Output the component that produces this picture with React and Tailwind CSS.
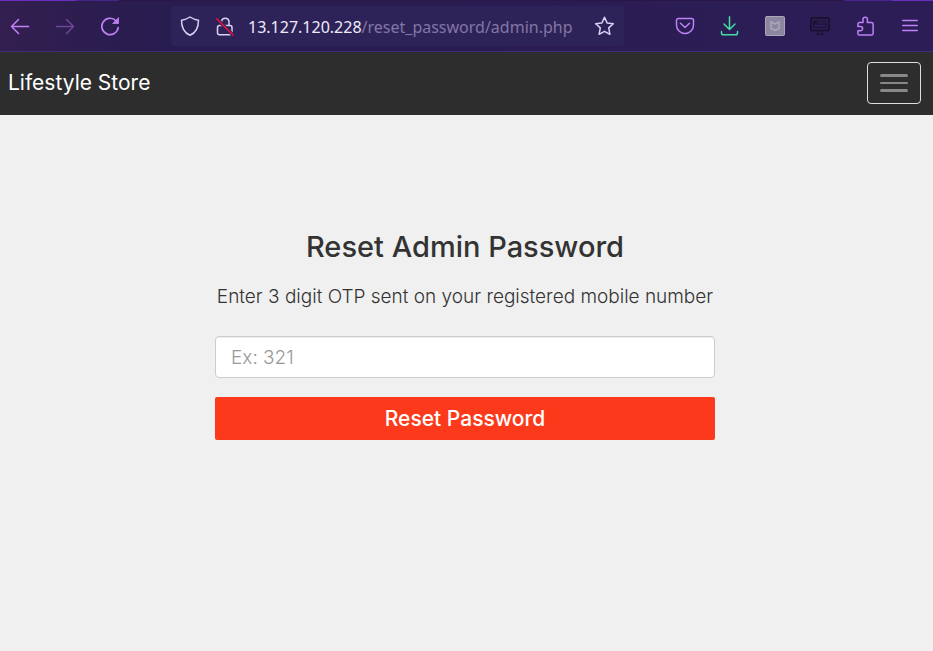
function ToolbarButton({ label, children }) {
  return (
    <button type="button" aria-label={label} className="flex h-10 w-10 shrink-0 items-center justify-center">
      {children}
    </button>
  );
}

function Icon({ children, className = '' }) {
  return (
    <svg
      viewBox="0 0 20 20"
      fill="none"
      stroke="currentColor"
      strokeWidth="1.5"
      strokeLinecap="round"
      strokeLinejoin="round"
      className={`h-5 w-5 shrink-0 ${className}`}
      aria-hidden="true"
    >
      {children}
    </svg>
  );
}

function TabStrip() {
  return (
    <div className="flex h-px">
      <span className="w-[76px] bg-[#6b2fc0]" />
      <span className="w-[43px] bg-[#45238c]" />
      <span className="flex-1 bg-[#2b1648]" />
      <span className="w-[48px] bg-[#47238f]" />
      <span className="w-[41px] bg-[#6b2fc0]" />
    </div>
  );
}

function BrowserBar() {
  return (
    <header className="border-b border-[#3e2c78] bg-[#291c4f] bg-linear-to-r from-[#331f50] via-[#291c4f] via-15% to-[#2c1d57]">
      <TabStrip />
      <div className="flex h-[50px] items-center pr-[3px]">
        <nav aria-label="History" className="flex gap-[5px] text-[#c080f8]">
          <ToolbarButton label="Back">
            <Icon>
              <path d="M18.5 10.5H1.5M8.500 3.500L1.500 10.500L8.500 17.500" />
            </Icon>
          </ToolbarButton>
          <ToolbarButton label="Forward">
            <Icon className="text-[#6d4599]">
              <path d="M1.500 10.500H18.500M11.500 3.500L18.500 10.500L11.500 17.500" />
            </Icon>
          </ToolbarButton>
          <ToolbarButton label="Reload">
            <Icon>
              <path d="M16.200 5A8.200 8.200 0 1 0 18.200 11.500" strokeWidth="1.700" />
              <path d="M18.500 2V7.500H13Z" fill="currentColor" strokeWidth="0.800" />
            </Icon>
          </ToolbarButton>
        </nav>
        <div className="mx-[41px] flex h-10 min-w-0 flex-1 items-center rounded bg-[#2e2359] pl-[9px] text-[#d9d0f5]">
          <Icon>
            <path d="M10 1C7.300 2.800 4.500 3.700 1.500 4.200C1.500 11 3.200 16.500 10 19.200C16.800 16.500 18.500 11 18.500 4.200C15.500 3.700 12.700 2.800 10 1Z" />
          </Icon>
          <Icon className="ml-[15px]">
            <path d="M6.500 9V5A3.900 3.900 0 0 1 14 5V9" />
            <rect x="2.500" y="9.500" width="14.500" height="9.300" rx="2" />
            <path d="M2 3L18 19" stroke="#2e2359" strokeWidth="3.500" />
            <path d="M2 3L18 19" stroke="#e3123f" strokeWidth="1.700" />
          </Icon>
          <p className="ml-[13px] min-w-0 flex-1 overflow-hidden pt-0.5 font-['Noto_Sans',sans-serif] text-[16px] leading-6 whitespace-nowrap text-[#8276a5]">
            <span className="text-[#efeafa]">13.127.120.228</span>/reset_password/admin.php
          </p>
          <ToolbarButton label="Bookmark this page">
            <Icon>
              <path d="M10.500 1.300L13.100 6.900L19.300 7.700L14.700 11.900L15.900 18.300L10.500 15.300L5.100 18.300L6.300 11.900L1.700 7.700L7.900 6.900Z" />
            </Icon>
          </ToolbarButton>
        </div>
        <div className="flex gap-[5px] text-[#c080f8]">
          <ToolbarButton label="Save to Pocket">
            <Icon>
              <path d="M3.500 2.500H16.500A2 2 0 0 1 18.500 4.500V9A8.500 8.500 0 0 1 1.500 9V4.500A2 2 0 0 1 3.500 2.500Z" />
              <path d="M5.500 7.200L10 11.500L14.500 7.200" />
            </Icon>
          </ToolbarButton>
          <ToolbarButton label="Downloads">
            <Icon className="text-[#43dda5]">
              <path d="M9.500 0.800V13M4 8L9.500 13.500L15 8M1.500 15.500V17A1.800 1.800 0 0 0 3.300 18.800H15.700A1.800 1.800 0 0 0 17.500 17V15.500" />
            </Icon>
          </ToolbarButton>
          <ToolbarButton label="McAfee WebAdvisor">
            <Icon className="text-[#aaa8b8]">
              <rect x="0.500" y="0.500" width="19" height="19" rx="1" fill="#8c86a0" strokeWidth="1" />
              <path d="M6 6L10 8L14 6V12.500L10 14.500L6 12.500Z" strokeWidth="1.500" strokeLinejoin="miter" />
            </Icon>
          </ToolbarButton>
          <ToolbarButton label="Screen tool">
            <Icon className="text-[#1a1230]">
              <rect x="1" y="2" width="18" height="12.500" rx="1" strokeWidth="2" />
              <path d="M4 5H16V11.500H4ZM4 8H16M7 5V8M8 15V17.500M12 15V17.500M6 18.300H14" strokeWidth="1" />
              <rect x="3.500" y="5" width="3" height="2.500" fill="currentColor" stroke="none" />
            </Icon>
          </ToolbarButton>
          <ToolbarButton label="Extensions">
            <Icon>
              <path d="M4 6.500H8V3.500A2.200 2.200 0 0 1 12.400 3.500V6.500H16.500A1.600 1.600 0 0 1 18.100 8.100V17.400A1.600 1.600 0 0 1 16.500 19H4.500A1.600 1.600 0 0 1 2.900 17.400V14.700H5.500A2.100 2.100 0 0 0 5.500 10.500H2.900V8.100A1.600 1.600 0 0 1 4.500 6.500Z" />
            </Icon>
          </ToolbarButton>
          <ToolbarButton label="Open application menu">
            <Icon>
              <path d="M2.800 4.500H17.200M2.800 9.500H17.200M2.800 14.500H17.200" />
            </Icon>
          </ToolbarButton>
        </div>
      </div>
    </header>
  );
}

function SiteNav() {
  return (
    <nav aria-label="Main" className="flex items-center justify-between bg-[#2d2d2d] pt-[10px] pr-3 pb-[11px] pl-2">
      <a href="#home" className="text-[21px] leading-7 text-white">
        Lifestyle Store
      </a>
      <button
        type="button"
        aria-label="Toggle navigation"
        className="flex h-[42px] w-[54px] flex-col items-center justify-center gap-[5px] rounded border border-[#dddddd]"
      >
        <span className="h-[3px] w-7 rounded-xs bg-[#888888]" />
        <span className="h-[2px] w-7 rounded-xs bg-[#888888]" />
        <span className="h-[3px] w-7 rounded-xs bg-[#888888]" />
      </button>
    </nav>
  );
}

export default function App() {
  return (
    <div className="min-h-screen bg-[#f0f0f0] font-[Inter,sans-serif] text-[#333333]">
      <BrowserBar />
      <SiteNav />
      <main className="pt-[112px] pr-[3px]">
        <form className="mx-auto flex max-w-[500px] flex-col" onSubmit={(event) => event.preventDefault()}>
          <h1 className="text-center text-[29px] leading-10 font-medium">Reset Admin Password</h1>
          <label htmlFor="otp" className="mt-4 text-center text-[19px] leading-7 font-light whitespace-nowrap">
            Enter 3 digit OTP sent on your registered mobile number
          </label>
          <input
            id="otp"
            type="text"
            inputMode="numeric"
            placeholder="Ex: 321"
            className="mt-[25px] h-[42px] rounded border border-[#cccccc] bg-white px-[15px] text-[19px] font-light shadow-[inset_0_1px_1px_rgba(0,0,0,0.075)] placeholder:text-[#999999]"
          />
          <button
            type="submit"
            className="mt-[19px] h-[43px] rounded-xs bg-[#fc3a1b] text-[21px] leading-7 font-medium text-white"
          >
            Reset Password
          </button>
        </form>
      </main>
    </div>
  );
}
